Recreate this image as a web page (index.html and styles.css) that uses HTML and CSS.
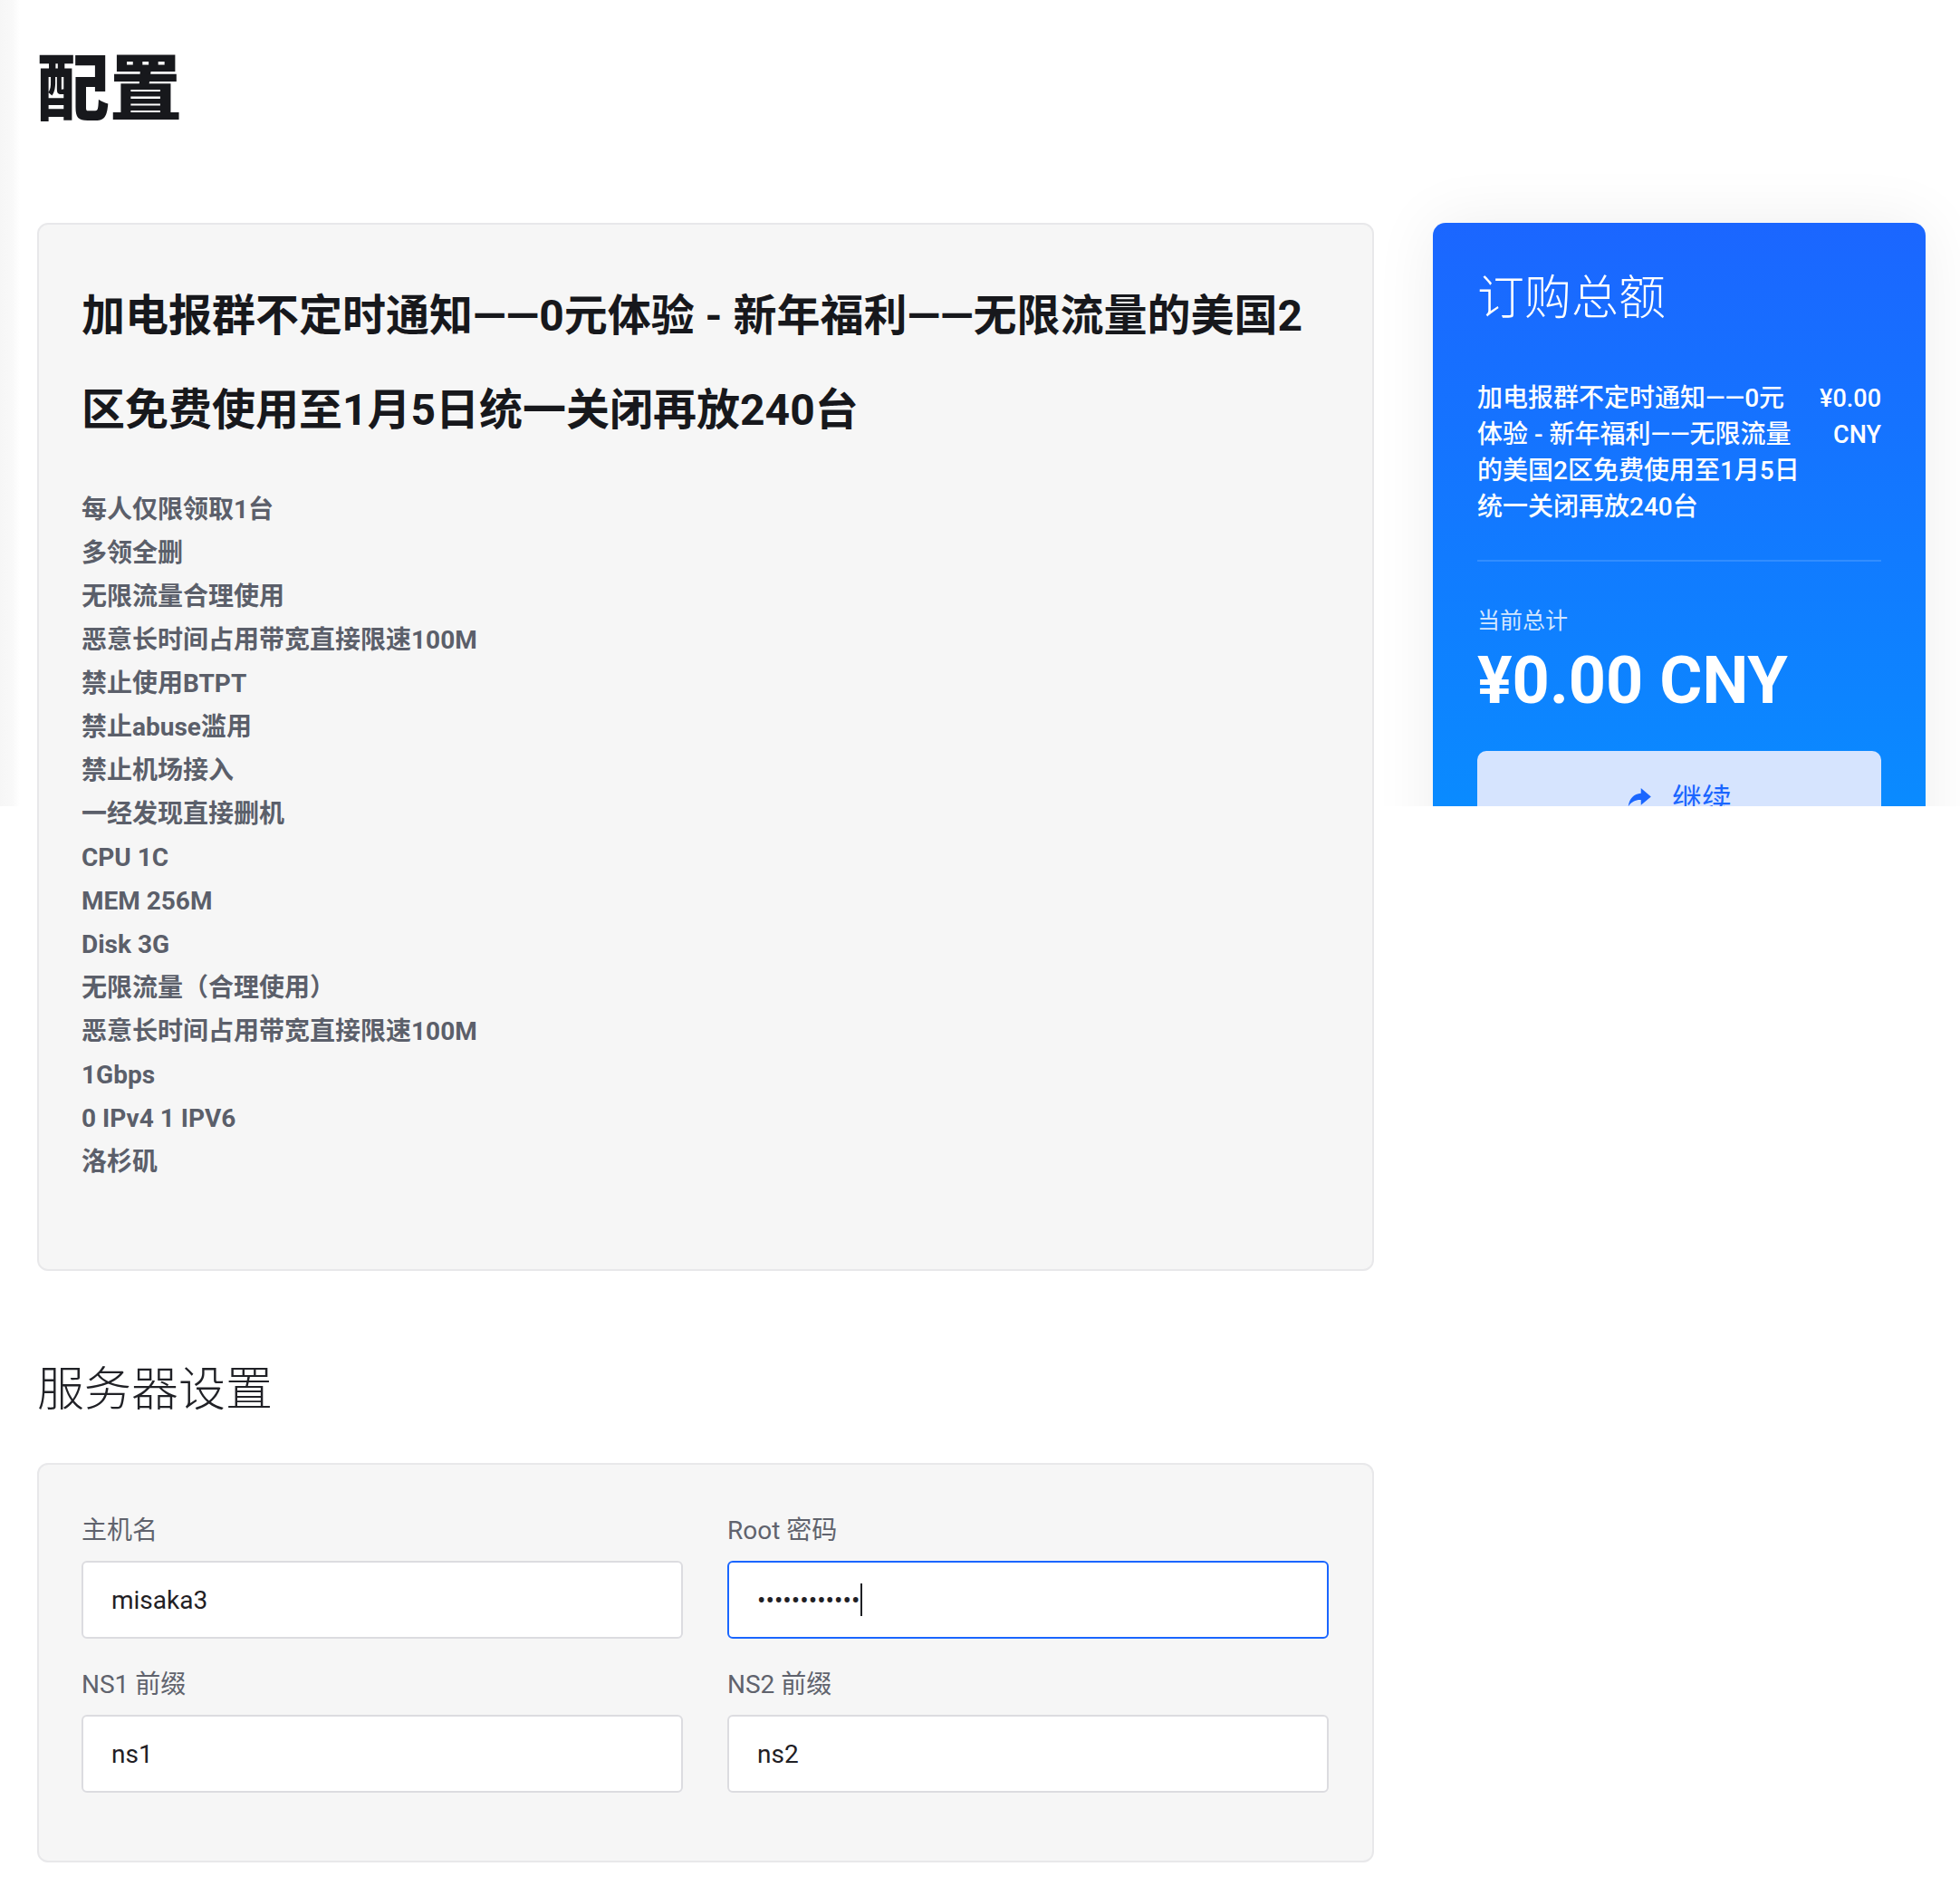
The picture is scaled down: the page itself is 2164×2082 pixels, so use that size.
FILE: index.html
```html
<!DOCTYPE html>
<html lang="zh-CN">
<head>
<meta charset="utf-8">
<title>配置</title>
<link rel="stylesheet" href="styles.css">
</head>
<body>
<div class="page">
  <h1 class="page-title">配置</h1>
  <div class="layout">
    <main class="main-col">
      <section class="card product-card">
        <h2 class="product-name">加电报群不定时通知——0元体验 - 新年福利——无限流量的美国2区免费使用至1月5日统一关闭再放240台</h2>
        <ul class="product-desc">
          <li>每人仅限领取1台</li>
          <li>多领全删</li>
          <li>无限流量合理使用</li>
          <li>恶意长时间占用带宽直接限速100M</li>
          <li>禁止使用BTPT</li>
          <li>禁止abuse滥用</li>
          <li>禁止机场接入</li>
          <li>一经发现直接删机</li>
          <li>CPU 1C</li>
          <li>MEM 256M</li>
          <li>Disk 3G</li>
          <li>无限流量（合理使用）</li>
          <li>恶意长时间占用带宽直接限速100M</li>
          <li>1Gbps</li>
          <li>0 IPv4 1 IPV6</li>
          <li>洛杉矶</li>
        </ul>
      </section>

      <h2 class="section-title">服务器设置</h2>
      <section class="card form-card">
        <div class="form-grid">
          <div class="form-group">
            <label class="form-label">主机名</label>
            <input class="form-input" type="text" value="misaka3">
          </div>
          <div class="form-group">
            <label class="form-label">Root 密码</label>
            <div class="form-input is-focused" role="textbox"><span class="pw-dots">••••••••••••</span><span class="caret"></span></div>
          </div>
          <div class="form-group">
            <label class="form-label">NS1 前缀</label>
            <input class="form-input" type="text" value="ns1">
          </div>
          <div class="form-group">
            <label class="form-label">NS2 前缀</label>
            <input class="form-input" type="text" value="ns2">
          </div>
        </div>
      </section>
    </main>

    <aside class="side-col">
      <div class="side-clip">
        <div class="summary">
          <h3 class="summary-title">订购总额</h3>
          <div class="summary-item">
            <div class="summary-item-name">加电报群不定时通知——0元体验 - 新年福利——无限流量的美国2区免费使用至1月5日统一关闭再放240台</div>
            <div class="summary-item-price">¥0.00 CNY</div>
          </div>
          <div class="summary-divider"></div>
          <div class="summary-total-label">当前总计</div>
          <div class="summary-total">¥0.00 CNY</div>
          <button class="btn-continue" type="button">
            <svg class="btn-icon" viewBox="0 0 24 24" aria-hidden="true"><path d="M13.5 3.5 L23 11.5 L13.5 19.5 V14.6 C8.2 14.4 4.6 16.3 1.5 20.8 C2.4 13.6 6.6 8.9 13.5 8.4 Z"/></svg>
            <span>继续</span>
          </button>
        </div>
      </div>
    </aside>
  </div>
</div>
</body>
</html>
```
FILE: styles.css
```css
* {
  box-sizing: border-box;
}

html, body {
  margin: 0;
  padding: 0;
}

body {
  background: #ffffff linear-gradient(to right, #f6f6f6 0, #f9f9f9 14px, #ffffff 22px) 0 0 / 22px 890px no-repeat;
  font-family: Roboto, "Noto Sans CJK SC", "Noto Sans", sans-serif;
  color: #1d1e22;
}

.page {
  padding: 0 38px 0 41px;
}

.page-title {
  margin: 0;
  padding-top: 51px;
  height: 246px;
  font-size: 80px;
  line-height: 96px;
  font-weight: 900;
  color: #17181c;
}

.layout {
  display: grid;
  grid-template-columns: 1fr 544px;
  column-gap: 65px;
  align-items: start;
}

.card {
  background: #f6f6f6;
  border: 2px solid #e8e8ea;
  border-radius: 12px;
}

.product-card {
  padding: 49px 47px 94px;
}

.product-name {
  margin: 0 0 34px;
  font-size: 48px;
  line-height: 104px;
  font-weight: 700;
  color: #17181c;
}

.product-desc {
  list-style: none;
  margin: 0;
  padding: 0;
  font-size: 28px;
  line-height: 48px;
  font-weight: 700;
  color: #5b5f6a;
}

.section-title {
  margin: 101px 0 49px;
  font-size: 52px;
  line-height: 62px;
  font-weight: 300;
  color: #202126;
}

.form-card {
  padding: 55px 48px 42px 47px;
}

.form-grid {
  display: grid;
  grid-template-columns: 1fr 1fr;
  column-gap: 49px;
}

.form-group {
  display: flex;
  flex-direction: column;
  margin-bottom: 33px;
}

.form-label {
  font-size: 28px;
  line-height: 36px;
  color: #60636d;
  margin-bottom: 15px;
}

.form-input {
  display: flex;
  align-items: center;
  height: 86px;
  width: 100%;
  padding: 0 31px;
  border: 2px solid #dcdce0;
  border-radius: 6px;
  background: #ffffff;
  font-family: Roboto, "Noto Sans CJK SC", sans-serif;
  font-size: 28px;
  color: #1f2024;
  outline: none;
}

.form-input.is-focused {
  border-color: #1a66ff;
}

.pw-dots {
  font-size: 28px;
  letter-spacing: 0;
  color: #1f2024;
}

.caret {
  display: inline-block;
  width: 2px;
  height: 36px;
  margin-left: 1px;
  background: #1f2024;
}

.side-col {
  min-width: 0;
}

.side-clip {
  height: 644px;
  overflow: hidden;
  margin: -80px -38px 0 -65px;
  padding: 80px 38px 0 65px;
  box-sizing: content-box;
}

.summary {
  padding: 53px 49px 49px 49px;
  border-radius: 14px;
  background: linear-gradient(180deg, #1b66ff 0%, #0a8aff 86%, #0893ff 100%);
  box-shadow: 0 0 70px rgba(0, 0, 0, 0.07);
  color: #ffffff;
}

.summary-title {
  margin: 0 0 59px;
  font-size: 52px;
  line-height: 62px;
  font-weight: 300;
}

.summary-item {
  display: flex;
  justify-content: space-between;
  font-size: 28px;
  line-height: 40px;
  font-weight: 500;
}

.summary-item-name {
  width: 359px;
}

.summary-item-price {
  flex: 1;
  text-align: right;
  font-size: 27px;
}

.summary-divider {
  height: 2px;
  margin: 38px 0 48px;
  background: rgba(255, 255, 255, 0.14);
}

.summary-total-label {
  font-size: 25px;
  line-height: 36px;
  color: rgba(255, 255, 255, 0.82);
}

.summary-total {
  margin-top: 5px;
  font-size: 72px;
  line-height: 86px;
  font-weight: 700;
}

.btn-continue {
  display: flex;
  align-items: center;
  justify-content: center;
  gap: 22px;
  width: 100%;
  height: 102px;
  margin-top: 34px;
  border: 0;
  border-radius: 10px;
  background: #d6e4fe;
  color: #1a66ff;
  font-family: Roboto, "Noto Sans CJK SC", sans-serif;
  font-size: 33px;
}

.btn-icon {
  width: 28px;
  height: 28px;
  fill: #1a66ff;
}
```
